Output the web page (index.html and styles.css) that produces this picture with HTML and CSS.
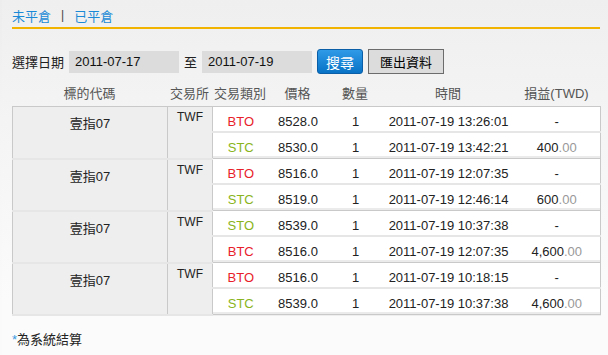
FILE: index.html
```html
<!DOCTYPE html>
<html lang="zh-Hant">
<head>
<meta charset="utf-8">
<title>已平倉</title>
<link rel="stylesheet" href="styles.css">
</head>
<body>
<div class="page">
  <nav class="tabs">
    <a class="tab">未平倉</a>
    <span class="sep">|</span>
    <a class="tab">已平倉</a>
  </nav>
  <form class="filter">
    <span class="label">選擇日期</span>
    <span class="date">2011-07-17</span>
    <span class="to">至</span>
    <span class="date">2011-07-19</span>
    <button type="button" class="btn-search">搜尋</button>
    <button type="button" class="btn-export">匯出資料</button>
  </form>
  <div class="thead">
    <span class="c-name">標的代碼</span>
    <span class="c-ex">交易所</span>
    <span class="c-type">交易類別</span>
    <span class="c-price">價格</span>
    <span class="c-qty">數量</span>
    <span class="c-time">時間</span>
    <span class="c-pnl">損益(TWD)</span>
  </div>
  <table class="grid">
    <colgroup>
      <col class="w-name"><col class="w-ex"><col class="w-type"><col class="w-price"><col class="w-qty"><col class="w-time"><col class="w-pnl">
    </colgroup>
    <tbody>
      <tr class="first">
        <td class="name" rowspan="2">壹指07</td>
        <td class="ex" rowspan="2">TWF</td>
        <td class="buy">BTO</td><td>8528.0</td><td>1</td><td>2011-07-19 13:26:01</td><td>-</td>
      </tr>
      <tr class="second">
        <td class="sell">STC</td><td>8530.0</td><td>1</td><td>2011-07-19 13:42:21</td><td>400<span class="dec">.00</span></td>
      </tr>
      <tr class="first">
        <td class="name" rowspan="2">壹指07</td>
        <td class="ex" rowspan="2">TWF</td>
        <td class="buy">BTO</td><td>8516.0</td><td>1</td><td>2011-07-19 12:07:35</td><td>-</td>
      </tr>
      <tr class="second">
        <td class="sell">STC</td><td>8519.0</td><td>1</td><td>2011-07-19 12:46:14</td><td>600<span class="dec">.00</span></td>
      </tr>
      <tr class="first">
        <td class="name" rowspan="2">壹指07</td>
        <td class="ex" rowspan="2">TWF</td>
        <td class="sell">STO</td><td>8539.0</td><td>1</td><td>2011-07-19 10:37:38</td><td>-</td>
      </tr>
      <tr class="second">
        <td class="buy">BTC</td><td>8516.0</td><td>1</td><td>2011-07-19 12:07:35</td><td>4,600<span class="dec">.00</span></td>
      </tr>
      <tr class="first">
        <td class="name" rowspan="2">壹指07</td>
        <td class="ex" rowspan="2">TWF</td>
        <td class="buy">BTO</td><td>8516.0</td><td>1</td><td>2011-07-19 10:18:15</td><td>-</td>
      </tr>
      <tr class="second">
        <td class="sell">STC</td><td>8539.0</td><td>1</td><td>2011-07-19 10:37:38</td><td>4,600<span class="dec">.00</span></td>
      </tr>
    </tbody>
  </table>
  <p class="note"><span class="star">*</span>為系統結算</p>
</div>
</body>
</html>
```
FILE: styles.css
```css
html, body {
  margin: 0;
  padding: 0;
}
body {
  width: 608px;
  height: 355px;
  overflow: hidden;
  background: linear-gradient(#ededed 0, #f4f4f4 120px, #fafafa 300px);
  font-family: "Liberation Sans", Arial, "Noto Sans CJK TC", sans-serif;
  font-size: 13px;
  color: #222;
}
.page {
  margin-left: 2px;
  padding: 5px 8px 0 10px;
  height: 350px;
  background: linear-gradient(#efefef 0, #f4f4f4 120px, #fbfbfb 300px);
}
.tabs {
  display: flex;
  align-items: center;
  height: 20px;
  padding-bottom: 2px;
  border-bottom: 2px solid #f2b200;
  gap: 10px;
}
.tab {
  color: #1a8ad6;
  font-size: 13px;
}
.sep {
  color: #444;
  font-size: 12px;
}
.filter {
  display: flex;
  align-items: center;
  margin-top: 20px;
  height: 25px;
}
.label {
  margin-right: 5px;
  color: #222;
}
.date {
  display: block;
  width: 104px;
  height: 22px;
  line-height: 22px;
  padding-left: 6px;
  background: #dcdcdc;
  color: #111;
}
.to {
  margin: 0 5px 0 5px;
}
.btn-search {
  margin-left: 5px;
  width: 46px;
  height: 25px;
  padding: 0;
  border: 1px solid #0a5ea8;
  border-radius: 3px;
  background: linear-gradient(#2f9ae6, #0873c6);
  color: #fff;
  font: 14px "Noto Sans CJK TC", sans-serif;
}
.btn-export {
  margin-left: 5px;
  width: 76px;
  height: 25px;
  padding: 0;
  border: 1px solid #6c6c6c;
  background: #dcdcdc;
  color: #000;
  font: 13px "Noto Sans CJK TC", sans-serif;
}
.thead {
  display: flex;
  margin-top: 9px;
  height: 23px;
  line-height: 22px;
  color: #555;
}
.thead span {
  text-align: center;
}
.c-name { width: 155px; }
.c-ex { width: 45px; }
.c-type { width: 56px; }
.c-price { width: 59px; }
.c-qty { width: 56px; }
.c-time { width: 130px; }
.c-pnl { width: 87px; }
.w-name { width: 155px; }
.w-ex { width: 45px; }
.w-type { width: 56px; }
.w-price { width: 59px; }
.w-qty { width: 56px; }
.w-time { width: 130px; }
.w-pnl { width: 87px; }
.grid {
  width: 588px;
  table-layout: fixed;
  border-collapse: collapse;
  border: 1px solid #c9c9c9;
  background: #eeeeee;
}
.grid td {
  padding: 4px 0 0;
  text-align: center;
  vertical-align: middle;
  background: #fff;
  color: #222;
}
.grid tr.first td {
  height: 20px;
  border-top: 1px solid #c9c9c9;
  border-bottom: 2px solid #e6e6e6;
}
.grid tr.second td {
  height: 21px;
  box-shadow: inset 0 -2px 0 #ebebeb;
  border-bottom: 1px solid #c9c9c9;
}
.grid td.name,
.grid td.ex {
  background: #eeeeee;
  vertical-align: top;
  box-shadow: none;
  border: 1px solid #c9c9c9;
}
.grid td.name {
  padding-top: 6px;
}
.grid td.ex {
  padding-top: 3px;
  font-size: 12px;
}
.buy { color: #e8202a !important; }
.sell { color: #8ab420 !important; }
.dec { color: #999; }
.note {
  margin: 13px 0 0;
  color: #222;
}
.star {
  color: #3a9ae0;
}
```
